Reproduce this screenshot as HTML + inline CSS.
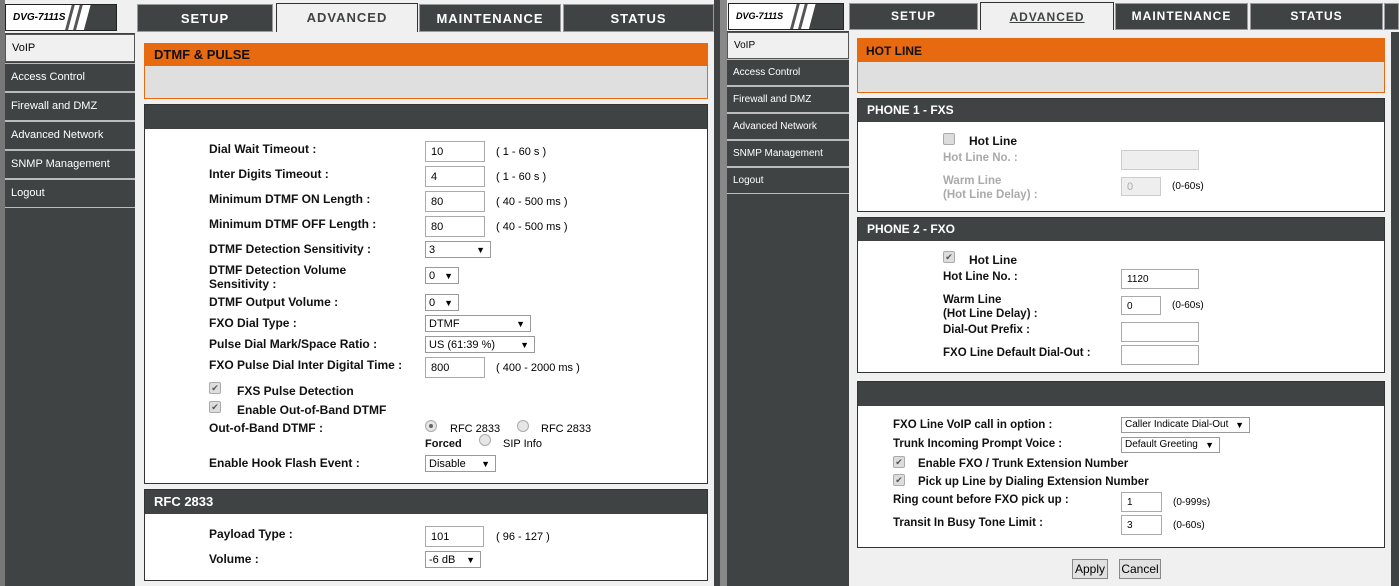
<!DOCTYPE html>
<html><head><meta charset="utf-8"><style>
*{margin:0;padding:0;box-sizing:border-box}
body{width:1399px;height:586px;overflow:hidden;background:#f0f0f0;position:relative;font-family:"Liberation Sans",Arial,sans-serif;}
div,span{position:absolute}
.dk{background:#404344}
.tab{background:#404344;color:#fff;font-weight:bold;font-size:13px;text-align:center;letter-spacing:1px;line-height:27px;border:1px solid #9a9a9a}
.tab.on{background:#f0f0f0;color:#404344;border:1px solid #333;border-bottom:none}
.logo{background:#fff;border:1px solid #222;overflow:hidden}
.logo b{position:absolute;left:7px;top:7px;font-size:10px;font-style:italic;font-weight:bold;color:#000}
.side{color:#fff;font-size:11px;padding-left:6px;background:#404344;border-top:1px solid #bbb;border-bottom:1px solid #bbb;left:0;width:100%}
.side.on{background:#f0f0f0;color:#000;border:1px solid #555}
.box{border:1px solid #333;background:#fff}
.hd{left:0;right:0;top:0;background:#404344;color:#fff;font-weight:bold;font-size:13px;padding-left:9px}
.l{font-weight:bold;font-size:12px;color:#111;white-space:nowrap;line-height:14px}
.g{color:#aaa}
.in{border:1px solid #aaa;background:#fff;font-size:11px;padding-left:5px;padding-top:2px;color:#000}
.sel{border:1px solid #999;background:#fff;font-size:11px;padding-left:3px;color:#000;line-height:16px}
.sel i{position:absolute;right:5px;top:0;font-style:normal;font-size:9px}
.u{font-size:11px;color:#000;white-space:nowrap}
.cb{width:12px;height:12px;border:1px solid #aaa;background:#ddd;border-radius:2px;font-size:9px;line-height:10px;text-align:center;color:#555}
.rd{width:12px;height:12px;border:1px solid #aaa;background:#e6e6e6;border-radius:50%}
.rd.on::after{content:"";position:absolute;left:3px;top:3px;width:4px;height:4px;border-radius:50%;background:#666}
.r .l{font-size:11.5px}
.r .u{font-size:10px}
.r .side{font-size:10px}
.btn{border:1px solid #888;background:#e1e1e1;font-size:12px;text-align:center;line-height:18px;color:#000}
</style></head><body>
<!-- LEFT -->
<div style="left:0;top:0;width:5px;height:586px;background:#777"></div>
<div class="logo" style="left:5px;top:4px;width:112px;height:27px"><b>DVG-7111S</b>
<span style="left:62px;top:-4px;width:3px;height:36px;background:#555;transform:skewX(-15deg)"></span>
<span style="left:70px;top:-4px;width:3px;height:36px;background:#555;transform:skewX(-15deg)"></span>
<span style="left:76px;top:-4px;width:40px;height:36px;background:#404344;transform:skewX(-15deg);transform-origin:0 100%"></span></div>
<div class="tab" style="left:137px;top:4px;width:136px;height:28px">SETUP</div>
<div class="tab on" style="left:276px;top:3px;width:142px;height:29px">ADVANCED</div>
<div class="tab" style="left:419px;top:4px;width:142px;height:28px">MAINTENANCE</div>
<div class="tab" style="left:563px;top:4px;width:151px;height:28px">STATUS</div>
<div class="dk" style="left:5px;top:33px;width:130px;height:553px">
<div class="side on" style="top:1px;height:28px;line-height:26px">VoIP</div>
<div class="side" style="top:30px;height:29px;line-height:27px">Access Control</div>
<div class="side" style="top:59px;height:29px;line-height:27px">Firewall and DMZ</div>
<div class="side" style="top:88px;height:29px;line-height:27px">Advanced Network</div>
<div class="side" style="top:117px;height:29px;line-height:27px">SNMP Management</div>
<div class="side" style="top:146px;height:29px;line-height:27px">Logout</div>
</div>
<div style="left:144px;top:43px;width:564px;height:56px;border:1px solid #e86a10;background:#dfdfdf"><div style="left:0;top:0;right:0;height:22px;background:#e86a10;font-weight:bold;font-size:13px;padding-left:9px;line-height:22px;color:#111">DTMF &amp; PULSE</div></div>
<div class="box" style="left:144px;top:104px;width:564px;height:380px"><div class="hd" style="height:24px"></div></div>
<div class="l" style="left:209px;top:142px">Dial Wait Timeout :</div><div class="in" style="left:425px;top:141px;width:60px;height:21px;line-height:17px">10</div><div class="u" style="left:496px;top:146px">( 1 - 60 s )</div>
<div class="l" style="left:209px;top:167px">Inter Digits Timeout :</div><div class="in" style="left:425px;top:166px;width:60px;height:21px;line-height:17px">4</div><div class="u" style="left:496px;top:171px">( 1 - 60 s )</div>
<div class="l" style="left:209px;top:192px">Minimum DTMF ON Length :</div><div class="in" style="left:425px;top:191px;width:60px;height:21px;line-height:17px">80</div><div class="u" style="left:496px;top:196px">( 40 - 500 ms )</div>
<div class="l" style="left:209px;top:217px">Minimum DTMF OFF Length :</div><div class="in" style="left:425px;top:216px;width:60px;height:21px;line-height:17px">80</div><div class="u" style="left:496px;top:221px">( 40 - 500 ms )</div>
<div class="l" style="left:209px;top:242px">DTMF Detection Sensitivity :</div><div class="sel" style="left:425px;top:241px;width:66px;height:17px">3<i>▼</i></div>
<div class="l" style="left:209px;top:263px">DTMF Detection Volume<br>Sensitivity :</div><div class="sel" style="left:425px;top:267px;width:34px;height:17px">0<i>▼</i></div>
<div class="l" style="left:209px;top:295px">DTMF Output Volume :</div><div class="sel" style="left:425px;top:294px;width:34px;height:17px">0<i>▼</i></div>
<div class="l" style="left:209px;top:316px">FXO Dial Type :</div><div class="sel" style="left:425px;top:315px;width:106px;height:17px">DTMF<i>▼</i></div>
<div class="l" style="left:209px;top:337px">Pulse Dial Mark/Space Ratio :</div><div class="sel" style="left:425px;top:336px;width:110px;height:17px">US (61:39 %)<i>▼</i></div>
<div class="l" style="left:209px;top:358px">FXO Pulse Dial Inter Digital Time :</div><div class="in" style="left:425px;top:357px;width:60px;height:21px;line-height:17px">800</div><div class="u" style="left:496px;top:362px">( 400 - 2000 ms )</div>
<div class="cb" style="left:209px;top:382px">✔</div><div class="l" style="left:237px;top:384px">FXS Pulse Detection</div>
<div class="cb" style="left:209px;top:401px">✔</div><div class="l" style="left:237px;top:403px">Enable Out-of-Band DTMF</div>
<div class="l" style="left:209px;top:421px">Out-of-Band DTMF :</div>
<div class="rd on" style="left:425px;top:420px"></div><div class="u" style="left:450px;top:423px">RFC 2833</div>
<div class="rd" style="left:517px;top:420px"></div><div class="u" style="left:541px;top:423px">RFC 2833</div>
<div class="l" style="left:425px;top:437px;font-size:11px">Forced</div><div class="rd" style="left:479px;top:434px"></div><div class="u" style="left:503px;top:438px">SIP Info</div>
<div class="l" style="left:209px;top:456px">Enable Hook Flash Event :</div><div class="sel" style="left:425px;top:455px;width:71px;height:17px">Disable<i>▼</i></div>
<div class="box" style="left:144px;top:489px;width:564px;height:92px"><div class="hd" style="height:24px;line-height:24px">RFC 2833</div></div>
<div class="l" style="left:209px;top:527px">Payload Type :</div><div class="in" style="left:425px;top:526px;width:59px;height:21px;line-height:17px">101</div><div class="u" style="left:496px;top:531px">( 96 - 127 )</div>
<div class="l" style="left:209px;top:552px">Volume :</div><div class="sel" style="left:425px;top:551px;width:56px;height:17px">-6 dB<i>▼</i></div>
<!-- divider -->
<div style="left:714px;top:0;width:6px;height:586px;background:#404344"></div>
<div style="left:720px;top:0;width:7px;height:586px;background:#888"></div>
<!-- RIGHT -->
<div class="r">
<div class="logo" style="left:728px;top:3px;width:116px;height:27px"><b style="font-size:9px">DVG-7111S</b>
<span style="left:64px;top:-4px;width:3px;height:36px;background:#555;transform:skewX(-15deg)"></span>
<span style="left:72px;top:-4px;width:3px;height:36px;background:#555;transform:skewX(-15deg)"></span>
<span style="left:78px;top:-4px;width:40px;height:36px;background:#404344;transform:skewX(-15deg);transform-origin:0 100%"></span></div>
<div class="tab" style="left:849px;top:3px;width:129px;height:27px;font-size:12px;line-height:25px">SETUP</div>
<div class="tab on" style="left:980px;top:2px;width:134px;height:28px;font-size:12px;line-height:28px;text-decoration:underline">ADVANCED</div>
<div class="tab" style="left:1115px;top:3px;width:133px;height:27px;font-size:12px;line-height:25px">MAINTENANCE</div>
<div class="tab" style="left:1250px;top:3px;width:133px;height:27px;font-size:12px;line-height:25px">STATUS</div>
<div class="tab" style="left:1384px;top:3px;width:15px;height:27px"></div>
<div class="dk" style="left:727px;top:31px;width:122px;height:555px">
<div class="side on" style="top:1px;height:27px;line-height:25px">VoIP</div>
<div class="side" style="top:28px;height:27px;line-height:25px">Access Control</div>
<div class="side" style="top:55px;height:27px;line-height:25px">Firewall and DMZ</div>
<div class="side" style="top:82px;height:27px;line-height:25px">Advanced Network</div>
<div class="side" style="top:109px;height:27px;line-height:25px">SNMP Management</div>
<div class="side" style="top:136px;height:27px;line-height:25px">Logout</div>
</div>
<div class="dk" style="left:1391px;top:32px;width:8px;height:554px"></div>
<div style="left:857px;top:38px;width:528px;height:55px;border:1px solid #e86a10;background:#dfdfdf"><div style="left:0;top:0;right:0;height:23px;background:#e86a10;font-weight:bold;font-size:12px;padding-left:8px;line-height:25px;color:#111">HOT LINE</div></div>
<div class="box" style="left:857px;top:98px;width:528px;height:114px"><div class="hd" style="height:23px;line-height:23px;font-size:12px">PHONE 1 - FXS</div></div>
<div class="cb" style="left:943px;top:133px"></div><div class="l" style="left:969px;top:134px;font-size:12px">Hot Line</div>
<div class="l g" style="left:943px;top:151px">Hot Line No. :</div><div class="in" style="left:1121px;top:150px;width:78px;height:20px;background:#eee;border-color:#ccc"></div>
<div class="l g" style="left:943px;top:174px">Warm Line<br>(Hot Line Delay) :</div><div class="in" style="left:1121px;top:177px;width:40px;height:19px;background:#eee;border-color:#ccc;color:#aaa;line-height:15px">0</div><div class="u g" style="left:1172px;top:181px">(0-60s)</div>
<div class="box" style="left:857px;top:217px;width:528px;height:156px"><div class="hd" style="height:23px;line-height:23px;font-size:12px">PHONE 2 - FXO</div></div>
<div class="cb" style="left:943px;top:251px">✔</div><div class="l" style="left:969px;top:253px;font-size:12px">Hot Line</div>
<div class="l" style="left:943px;top:270px">Hot Line No. :</div><div class="in" style="left:1121px;top:269px;width:78px;height:20px;line-height:16px;font-size:10px">1120</div>
<div class="l" style="left:943px;top:293px">Warm Line<br>(Hot Line Delay) :</div><div class="in" style="left:1121px;top:296px;width:40px;height:19px;line-height:15px;font-size:10px">0</div><div class="u" style="left:1172px;top:300px">(0-60s)</div>
<div class="l" style="left:943px;top:323px">Dial-Out Prefix :</div><div class="in" style="left:1121px;top:322px;width:78px;height:20px"></div>
<div class="l" style="left:943px;top:346px">FXO Line Default Dial-Out :</div><div class="in" style="left:1121px;top:345px;width:78px;height:20px"></div>
<div class="box" style="left:857px;top:381px;width:528px;height:167px"><div class="hd" style="height:24px"></div></div>
<div class="l" style="left:893px;top:418px">FXO Line VoIP call in option :</div><div class="sel" style="left:1121px;top:417px;width:129px;height:16px;font-size:10px;line-height:14px">Caller Indicate Dial-Out<i>▼</i></div>
<div class="l" style="left:893px;top:437px">Trunk Incoming Prompt Voice :</div><div class="sel" style="left:1121px;top:437px;width:99px;height:16px;font-size:10px;line-height:14px">Default Greeting<i>▼</i></div>
<div class="cb" style="left:893px;top:456px">✔</div><div class="l" style="left:918px;top:457px">Enable FXO / Trunk Extension Number</div>
<div class="cb" style="left:893px;top:474px">✔</div><div class="l" style="left:918px;top:475px">Pick up Line by Dialing Extension Number</div>
<div class="l" style="left:893px;top:493px">Ring count before FXO pick up :</div><div class="in" style="left:1121px;top:492px;width:41px;height:20px;line-height:16px;font-size:10px">1</div><div class="u" style="left:1173px;top:497px">(0-999s)</div>
<div class="l" style="left:893px;top:516px">Transit In Busy Tone Limit :</div><div class="in" style="left:1121px;top:515px;width:41px;height:20px;line-height:16px;font-size:10px">3</div><div class="u" style="left:1173px;top:520px">(0-60s)</div>
<div class="btn" style="left:1072px;top:559px;width:36px;height:20px">Apply</div>
<div class="btn" style="left:1119px;top:559px;width:42px;height:20px">Cancel</div>
</div>
</body></html>
